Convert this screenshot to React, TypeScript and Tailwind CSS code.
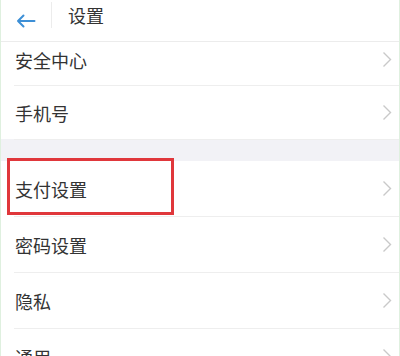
import { ReactNode } from "react";

const font = { fontFamily: '"Noto Sans CJK SC", "Noto Sans", sans-serif' };

function Chevron() {
  return (
    <svg width="10" height="17" viewBox="0 0 10 17" className="shrink-0">
      <path d="M1.5 1.5 L8.5 8.5 L1.5 15.5" fill="none" stroke="#c9c9c9" strokeWidth="1.4" />
    </svg>
  );
}

interface RowProps {
  label: string;
  className?: string;
  children?: ReactNode;
}

function Row({ label, className = "h-[55px]", children }: RowProps) {
  return (
    <div className="relative">
      <div className={`flex items-center justify-between pl-[14px] pr-[7px] ${className}`}>
        <span className="text-[18px] leading-none text-[#333333]">{label}</span>
        <Chevron />
      </div>
      <div className="ml-[13px] h-px bg-[#eeeeee]" />
      {children}
    </div>
  );
}

export default function App() {
  return (
    <div
      className="w-[400px] h-[356px] overflow-hidden bg-white border-l border-r border-[#dff0df]"
      style={font}
    >
      <div className="flex items-center h-[42px] border-b border-[#ececec]">
        <div className="flex items-center justify-center w-[50px] h-full">
          <svg width="20" height="14" viewBox="0 0 20 14">
            <path
              d="M18.5 7 H2 M7.5 1.5 L2 7 L7.5 12.5"
              fill="none"
              stroke="#3d8fd6"
              strokeWidth="2"
              strokeLinecap="round"
              strokeLinejoin="round"
            />
          </svg>
        </div>
        <div className="w-px h-[26px] bg-[#ececec] -mt-[12px]" />
        <span className="ml-[16px] -mt-[12px] text-[18px] leading-none text-[#333333]">设置</span>
      </div>

      <Row label="安全中心" className="h-[43px] pb-[8px]" />
      <Row label="手机号" className="h-[53px]" />
      <div className="h-[22px] bg-[#f2f2f6] -mt-px" />

      <Row label="支付设置">
        <div className="absolute left-[6px] -top-[3px] w-[167px] h-[57px] border-[3px] border-[#e0373b]" />
      </Row>
      <Row label="密码设置" />
      <Row label="隐私" />
      <Row label="通用" />
    </div>
  );
}
